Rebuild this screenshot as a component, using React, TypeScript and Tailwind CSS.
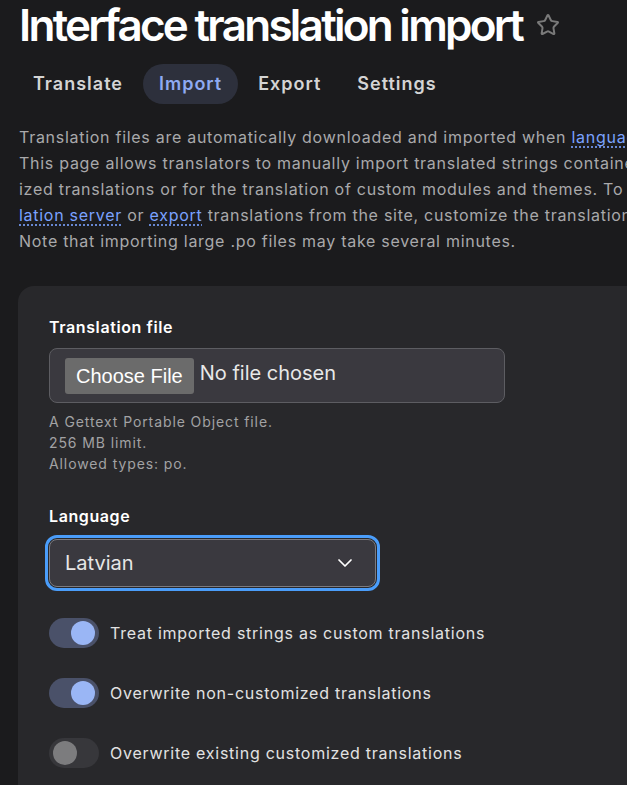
import { ChevronDown, Star } from "lucide-react";

const toggles = [
  { label: "Treat imported strings as custom translations", on: true },
  { label: "Overwrite non-customized translations", on: true },
  { label: "Overwrite existing customized translations", on: false },
];

const tabs = ["Translate", "Import", "Export", "Settings"];

function Toggle({ on }: { on: boolean }) {
  return (
    <span
      className={`flex h-[30px] w-[50px] shrink-0 items-center rounded-full px-[4px] ${
        on ? "justify-end bg-[#4a5169]" : "justify-start bg-[#37373b]"
      }`}
    >
      <span
        className={`h-[24px] w-[24px] rounded-full ${on ? "bg-[#9ab6f5]" : "bg-[#7c7c7e]"}`}
      />
    </span>
  );
}

export default function App() {
  return (
    <div
      className="h-[785px] w-full overflow-hidden bg-[#1b1b1d] text-[#e6e6e6]"
      style={{ fontFamily: "Inter, 'Noto Sans', sans-serif" }}
    >
      {/* Title */}
      <div className="flex items-center gap-[14px] pl-[19px] pt-[1px]">
        <h1 className="whitespace-nowrap text-[44px] font-semibold leading-[48px] tracking-[-0.062em] text-white">
          Interface translation import
        </h1>
        <Star className="h-6 w-6 text-[#7a7a7a]" strokeWidth={2} />
      </div>

      {/* Tabs */}
      <nav className="mt-[15px] flex items-center gap-[4px] pl-[17px]">
        {tabs.map((tab) => (
          <span
            key={tab}
            className={`rounded-full px-[16px] py-[8px] text-[18px] font-semibold leading-[24px] tracking-[1px] ${
              tab === "Import" ? "bg-[#2d303c] text-[#8faaf2]" : "text-[#d4d4d4]"
            }`}
          >
            {tab}
          </span>
        ))}
      </nav>

      {/* Help text */}
      <div className="mt-[20px] whitespace-nowrap pl-[19px] text-[16px] leading-[26px] tracking-[0.72px] text-[#a9a9ab]">
        <p>
          Translation files are automatically downloaded and imported when{" "}
          <a className="text-[#7aa2ff] underline decoration-dotted underline-offset-4">languages are added</a>, or when new
          modules or themes are enabled.
        </p>
        <p>
          This page allows translators to manually import translated strings contained in a Gettext Portable Object
          (.po) file.
        </p>
        <p>ized translations or for the translation of custom modules and themes. To customize translations you can</p>
        <p>
          <a className="text-[#7aa2ff] underline decoration-dotted underline-offset-4">lation server</a> or{" "}
          <a className="text-[#7aa2ff] underline decoration-dotted underline-offset-4">export</a> translations from the
          site, customize the translations using a simple text editor
        </p>
        <p>Note that importing large .po files may take several minutes.</p>
      </div>

      {/* Form card */}
      <div className="ml-[18px] mt-[32px] w-[700px] rounded-tl-[16px] bg-[#28282b] pb-10 pl-[31px] pt-[30px]">
        <label className="block text-[16px] font-semibold leading-[22px] tracking-[0.6px] text-white">
          Translation file
        </label>
        <div className="mt-[10px] flex h-[55px] w-[456px] items-center gap-[6px] rounded-[8px] border border-[#5d5d62] bg-[#3a393f] pl-[15px]">
          <span
            className="flex h-[36px] items-center rounded-[3px] bg-[#6b6b6b] px-[11px] text-[20px] text-white"
            style={{ fontFamily: "'Liberation Sans', Arial, sans-serif" }}
          >
            Choose File
          </span>
          <span className="-mt-[5px] text-[20px] text-[#e8e8e8]">No file chosen</span>
        </div>
        <div className="mt-[8px] text-[14px] leading-[21px] tracking-[0.9px] text-[#a2a2a4]">
          <p>A Gettext Portable Object file.</p>
          <p>256 MB limit.</p>
          <p>Allowed types: po.</p>
        </div>

        <label className="mt-[31px] block text-[16px] font-semibold leading-[22px] tracking-[0.6px] text-white">
          Language
        </label>
        <div className="-ml-[4px] mt-[8px] w-[335px] rounded-[12px] border-[3px] border-[#4a9dfa] p-[1px]">
          <div className="flex h-[48px] items-center justify-between rounded-[8px] border border-[#7b7b80] bg-[#3a393f] pl-[15px] pr-[18px]">
            <span className="text-[20px] text-[#e6e6e6]">Latvian</span>
            <ChevronDown className="h-6 w-6 text-white" strokeWidth={1.75} />
          </div>
        </div>

        <div className="mt-[27px] flex flex-col gap-[30px]">
          {toggles.map((t) => (
            <div key={t.label} className="flex items-center gap-[11px]">
              <Toggle on={t.on} />
              <span className="text-[16px] leading-[22px] tracking-[0.75px] text-[#e2e2e2]">{t.label}</span>
            </div>
          ))}
        </div>
      </div>
    </div>
  );
}
